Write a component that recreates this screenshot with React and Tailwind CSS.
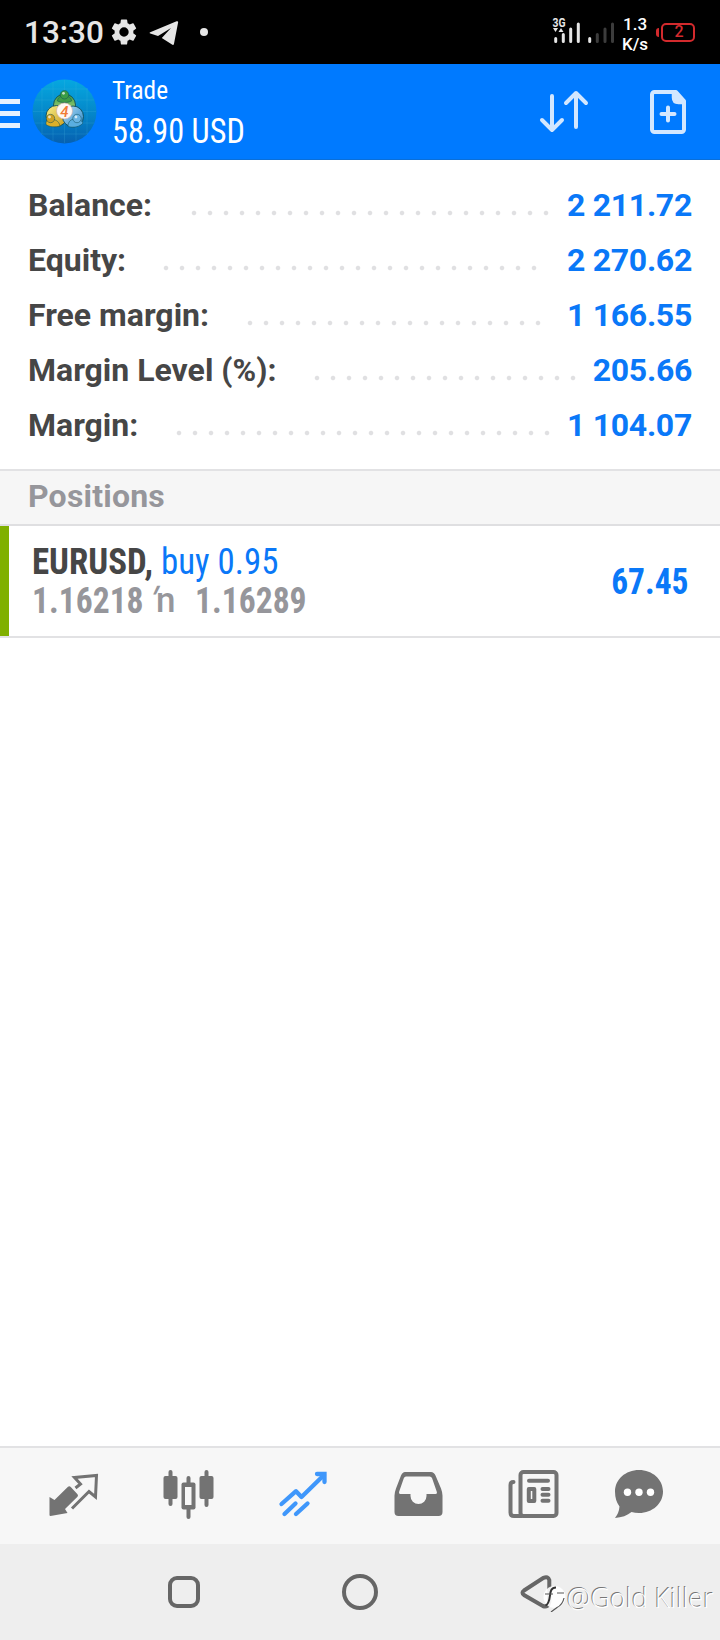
import React from "react";

const summary = [
  { label: "Balance:", value: "2 211.72", labelWidth: "w-[158px]", dotsWidth: "w-[368px]" },
  { label: "Equity:", value: "2 270.62", labelWidth: "w-[130px]", dotsWidth: "w-[384px]" },
  { label: "Free margin:", value: "1 166.55", labelWidth: "w-[214px]", dotsWidth: "w-[304px]" },
  { label: "Margin Level (%):", value: "205.66", labelWidth: "w-[281px]", dotsWidth: "w-[272px]" },
  { label: "Margin:", value: "1 104.07", labelWidth: "w-[143px]", dotsWidth: "w-[384px]" },
];

function StatusBar() {
  return (
    <div className="flex h-16 shrink-0 items-center bg-black text-[#e6e6e6]">
      <div className="ml-[24px] w-[87px] text-[31.5px] font-medium leading-[64px] pt-[2px]">13:30</div>
      <svg className="h-[26px] w-[26px]" viewBox="2 2 20 20" fill="currentColor">
        <path d="M19.14 12.94c.04-.3.06-.61.06-.94 0-.32-.02-.64-.07-.94l2.03-1.58a.49.49 0 0 0 .12-.61l-1.92-3.32a.49.49 0 0 0-.59-.22l-2.39.96c-.5-.38-1.03-.7-1.62-.94l-.36-2.54a.48.48 0 0 0-.48-.41h-3.84c-.24 0-.43.17-.47.41l-.36 2.54c-.59.24-1.13.57-1.62.94l-2.39-.96a.48.48 0 0 0-.59.22L2.74 8.87c-.12.21-.08.47.12.61l2.03 1.58c-.05.3-.09.63-.09.94s.02.64.07.94l-2.03 1.58a.49.49 0 0 0-.12.61l1.92 3.32c.12.22.37.29.59.22l2.39-.96c.5.38 1.03.7 1.62.94l.36 2.54c.05.24.24.41.48.41h3.84c.24 0 .44-.17.47-.41l.36-2.54c.59-.24 1.13-.56 1.62-.94l2.39.96c.22.08.47 0 .59-.22l1.92-3.32a.48.48 0 0 0-.12-.61l-2.01-1.58zM12 15.6A3.6 3.6 0 1 1 12 8.4a3.6 3.6 0 0 1 0 7.2z" />
      </svg>
      <svg className="ml-[12px] mt-[1px] h-[26px] w-[30px]" viewBox="0 0 30 26" fill="currentColor">
        <path d="M1.2 12.2 27.6 1.3c1-.4 1.700.2 1.500 1.300L25 23.800c-.2 1.200-1.100 1.500-2 .8L12.800 18 22 8 9 16 1.300 13.600c-.9-.3-.9-1-.1-1.400z" />
      </svg>
      <span className="ml-[21px] h-[8px] w-[8px] rounded-full bg-[#e6e6e6]" />
      <svg className="ml-[344px] h-[36px] w-[64px]" viewBox="0 0 64 36">
        <text x="0.5" y="12.5" fontSize="13" fontWeight="700" textLength="13" lengthAdjust="spacingAndGlyphs" fill="#e6e6e6">3G</text>
        <path d="M1 14h5l-2.500 4zM6.500 18h5l-2.500-4z" fill="#e6e6e6" />
        <g strokeWidth="3" strokeLinecap="round" stroke="#e6e6e6">
          <path d="M3.700 24.500v3M11.300 20.500v7M18.700 15v12.500M26.300 10v17.500M37.700 24.500v3" />
          <path d="M45.300 20.500v7M53 15v12.500M60.500 10v17.500" stroke="#3c3c3c" />
        </g>
      </svg>
      <div className="ml-[6px] mt-[4px] flex w-[34px] flex-col whitespace-nowrap text-[17px] font-medium text-white">
        <div className="h-[20px] pl-px leading-[20px]">1.3</div>
        <div className="h-[20px] leading-[20px]">K/s</div>
      </div>
      <div className="flex items-center">
        <span className="h-[9px] w-[3px] rounded-l-sm bg-[#d32a2d]" />
        <span className="ml-[2px] flex h-[19px] w-[34px] items-center justify-center rounded-[5px] border-2 border-[#d32a2d] pl-[2px] text-[16px] font-medium leading-none text-[#d32a2d]">
          2
        </span>
      </div>
    </div>
  );
}

function AppLogo() {
  return (
    <svg className="ml-[12px] h-[65px] w-[65px]" viewBox="0 0 65 65">
      <defs>
        <linearGradient id="sky" x1="0" y1="0" x2="0" y2="1">
          <stop offset="0" stopColor="#06a8e0" />
          <stop offset="0.55" stopColor="#0485c8" />
          <stop offset="1" stopColor="#0660b0" />
        </linearGradient>
        <linearGradient id="green" x1="0" y1="0" x2="0" y2="1">
          <stop offset="0" stopColor="#3a9d45" />
          <stop offset="1" stopColor="#c4e08a" />
        </linearGradient>
        <linearGradient id="gold" x1="0" y1="0" x2="1" y2="1">
          <stop offset="0" stopColor="#f7f08a" />
          <stop offset="1" stopColor="#c99a1a" />
        </linearGradient>
        <linearGradient id="blue" x1="0" y1="0" x2="1" y2="1">
          <stop offset="0" stopColor="#b5e0f7" />
          <stop offset="1" stopColor="#2a86c8" />
        </linearGradient>
      </defs>
      <circle cx="32.500" cy="32.500" r="32" fill="url(#sky)" />
      <path d="M10 9v46M21 3v59M32.500 1v63M44 3v59M55 9v46M9 10h47M3 21h59M1 32.500h63M3 44h59M9 55h47" stroke="#4db8e0" strokeOpacity="0.2" />
      <g stroke="#0d4d59" strokeWidth="0.900">
        <circle cx="32.500" cy="26" r="11" fill="url(#green)" />
        <circle cx="24.500" cy="37" r="10.500" fill="url(#gold)" />
        <circle cx="41" cy="37.500" r="10.500" fill="url(#blue)" />
      </g>
      <g stroke="#0d4d59" strokeWidth="0.500">
        <path d="M25.500 22c0-3.500 3-5 7-5s7 1.500 7 5c-4 2-10 2-14 0z" fill="#3f9c46" />
        <path d="M14 45.500c-.5-4 2-5.500 5-5.500s8 1.500 9 7c-5 1.500-11 1-14-1.500z" fill="#dcb02a" />
        <path d="M36 47.500c0-5 3-7.500 7-7.500s7 1.500 8 4c-3 4-10 5-15 3.500z" fill="#5aaee0" />
        <circle cx="32.500" cy="15.800" r="4.200" fill="#3a9d45" />
        <circle cx="18.500" cy="39.500" r="4.200" fill="#cfa224" />
        <circle cx="45" cy="39.500" r="4.200" fill="#68b4e4" />
      </g>
      <g fill="#fff" fillOpacity="0.700">
        <circle cx="31.500" cy="14.300" r="1.400" />
        <circle cx="17.500" cy="38" r="1.400" />
        <circle cx="44" cy="38" r="1.400" />
      </g>
      <circle cx="32.500" cy="32" r="8" fill="#fdf8f3" stroke="#caa" strokeWidth="0.600" />
      <text x="32.500" y="37.500" textAnchor="middle" fontSize="15" fontStyle="italic" fontWeight="500" fill="#f07a35">4</text>
    </svg>
  );
}

function Header() {
  return (
    <div className="flex h-24 shrink-0 items-center border-b border-[#0b6fd8] bg-[#007aff] text-white">
      <div className="mt-[3px] flex w-[20px] flex-col gap-[7px]">
        <span className="h-[5px] bg-[#e4f1ff]" />
        <span className="h-[5px] bg-[#e4f1ff]" />
        <span className="h-[5px] bg-[#e4f1ff]" />
      </div>
      <AppLogo />
      <div className="ml-[15px] mb-[2px] w-[414px] whitespace-nowrap font-stretch-75%">
        <div className="w-fit origin-left scale-x-[0.955] text-[26.5px] leading-[40px]">Trade</div>
        <div className="w-fit origin-left scale-x-[0.935] text-[34.500px] leading-[42px]">58.90 USD</div>
      </div>
      <svg className="ml-[12px] h-[46px] w-[52px]" viewBox="0 0 52 46" fill="none" stroke="#d3e7ff" strokeWidth="4" strokeLinecap="round" strokeLinejoin="round">
        <path d="M14 7v34M4 31l10 10 10-10M38 38V4M28 14 38 4l10 10" />
      </svg>
      <svg className="ml-[59px] h-[46px] w-[38px]" viewBox="0 0 38 46" fill="none" stroke="#d3e7ff" strokeWidth="4" strokeLinejoin="round">
        <path d="M3 5.500a2.500 2.500 0 0 1 2.500-2.500H27l8 9v28.500a2.500 2.500 0 0 1-2.500 2.500h-27A2.500 2.500 0 0 1 3 40.500z" />
        <path d="M23.500 3.500v5c0 4 2.500 6 6 6H36L27 4z" fill="#d3e7ff" strokeWidth="1.500" />
        <path d="M19 18.500v13M12.500 25h13" strokeLinecap="round" />
      </svg>
    </div>
  );
}

function AccountSummary() {
  return (
    <div className="h-[311px] shrink-0 border-b-2 border-[#e2e2e4] pt-[18px] pr-[28px] pl-[28px]">
      {summary.map((row) => (
        <div key={row.label} className="flex h-[55px] items-center text-[32px] leading-[55px]">
          <div className={`shrink-0 whitespace-nowrap font-bold text-[#464646] ${row.labelWidth}`}>{row.label}</div>
          <div
            className={`mt-[14px] h-[6px] shrink-0 bg-[radial-gradient(circle,#e0e0e2_1.800px,transparent_2.700px)] bg-[length:16px_6px] ${row.dotsWidth}`}
          />
          <div className="ml-auto whitespace-nowrap font-bold text-[#0a78f8] -tracking-[0.3px]">{row.value}</div>
        </div>
      ))}
    </div>
  );
}

function Positions() {
  return (
    <div className="flex-1">
      <div className="h-[55px] border-b-2 border-[#dfdfe1] bg-[#f6f6f6] pl-[28px] text-[32px] font-bold leading-[51px] tracking-[0.2px] text-[#96969b]">
        Positions
      </div>
      <div className="flex h-[112px] items-center border-b-2 border-[#e2e2e4] pr-[32px] font-stretch-75%">
        <div className="h-[110px] w-[9px] bg-[#80b000]" />
        <div className="ml-[23px] whitespace-nowrap text-[36.500px] leading-[39px]">
          <div className="flex">
            <div className="w-[129px]">
              <div className="w-fit origin-left scale-x-[0.955] font-bold text-[#464646]">EURUSD,</div>
            </div>
            <div className="w-fit origin-left scale-x-[0.955] text-[#0a78f8]">buy 0.95</div>
          </div>
          <div className="flex font-bold text-[#96969b]">
            <div className="w-[117px]">
              <div className="w-fit origin-left scale-x-[0.92]">1.16218</div>
            </div>
            <div className="flex w-[46px] text-[35px] font-medium font-stretch-100%">
              <span className="w-[7px] -skew-x-[24deg]">'</span>
              <span>n</span>
            </div>
            <div className="w-fit origin-left scale-x-[0.92]">1.16289</div>
          </div>
        </div>
        <div className="mt-[2px] ml-auto origin-right scale-x-[0.915] text-[36.500px] font-bold text-[#0a78f8]">67.45</div>
      </div>
    </div>
  );
}

function TabBar() {
  return (
    <div className="flex h-[98px] shrink-0 items-center border-t-2 border-[#e2e2e4] bg-[#f7f7f7] pl-[44px] text-[#737373]">
      <svg className="h-[56px] w-[60px]" viewBox="44 1468 60 56">
        <path d="M49.500 1497 54.500 1500 68 1486.700q1.500-1 3 .5l6.500 7q1 1.300 0 2.500L65 1509l2.500 4-17 3q-1 0-1-1z" fill="currentColor" />
        <path d="M75.500 1488 80.500 1484 74.500 1477.500 96.500 1475.500 95.500 1497 89 1491.500 72 1508.500" fill="none" stroke="currentColor" strokeWidth="3" />
      </svg>
      <svg className="ml-[56px] h-[56px] w-[56px]" viewBox="160 1468 56 56" fill="currentColor">
        <path d="M170.500 1472v32M206.500 1472v33M188.500 1478v39" stroke="currentColor" strokeWidth="4" strokeLinecap="round" />
        <rect x="163.500" y="1476" width="14" height="23" rx="2" />
        <rect x="199.500" y="1476" width="14" height="23" rx="2" />
        <rect x="181.500" y="1482.500" width="14" height="27" rx="2" />
        <rect x="185" y="1487" width="6.500" height="18" fill="#f7f7f7" />
      </svg>
      <svg className="ml-[60px] h-[56px] w-[56px]" viewBox="276 1468 56 56" fill="none" stroke="#3f97fb" strokeWidth="4.300" strokeLinecap="round" strokeLinejoin="round">
        <path d="M281.500 1504 296 1491.200 301.500 1497 324 1475" />
        <path d="M284.500 1514 295.500 1503.500M296 1514 307.500 1503.500" />
        <path d="M317 1474h7.500v8" strokeLinejoin="miter" />
      </svg>
      <svg className="ml-[60px] h-[56px] w-[56px]" viewBox="392 1468 56 56" fill="currentColor" fillRule="evenodd">
        <path d="M405 1472h26q3 0 4.500 3.500l5.500 13q1.500 4 1.500 7v16.500q0 4-4 4h-40q-4 0-4-4v-16.500q0-3 1.500-7l5-13q1.500-3.500 4-3.500zM406 1476.500q-1.500 0-2.200 1.800l-4.600 13.200q-.7 2.500 1.300 2.500h10v2a8 8 0 0 0 16 0v-2h9q2 0 1.200-2.500l-4.600-13.200q-.7-1.800-2.500-1.800z" />
      </svg>
      <svg className="ml-[56px] h-[56px] w-[60px]" viewBox="504 1468 60 56" fill="none" stroke="currentColor" strokeWidth="4" strokeLinecap="round" strokeLinejoin="round">
        <rect x="520.500" y="1472" width="36" height="44" rx="3" />
        <path d="M513.500 1482q-3 0-3 3v27.500q0 3.500 3.500 3.500h8" />
        <path d="M529 1480.800h19M542.500 1489h6M542.500 1494.800h6M542.500 1500.800h6" />
        <rect x="528.800" y="1489" width="5.500" height="12" />
      </svg>
      <svg className="ml-[48px] h-[56px] w-[56px]" viewBox="612 1468 56 56">
        <path d="M639 1470c13.500 0 24 9.500 24 21.500s-10.500 21.500-24 21.500q-4 0-7.500-1c-4 3.500-10 5.500-16.500 6q4-5 4.500-11.500-4.500-6-4.500-15c0-12 10.500-21.500 24-21.500z" fill="currentColor" />
        <g fill="#fff">
          <circle cx="627.500" cy="1492.300" r="3.700" />
          <circle cx="639" cy="1492.300" r="3.700" />
          <circle cx="650.500" cy="1492.300" r="3.700" />
        </g>
      </svg>
    </div>
  );
}

function SystemNav() {
  return (
    <div className="flex h-24 shrink-0 items-center bg-[#eeeeee]">
      <span className="ml-[168px] h-[32px] w-[32px] rounded-[9px] border-4 border-[#666]" />
      <span className="ml-[142px] h-[36px] w-[36px] rounded-full border-4 border-[#666]" />
      <div className="relative ml-[142px] h-[40px] w-[200px]">
        <svg className="h-[40px] w-[48px]" viewBox="520 1572 48 40">
          <path d="M524 1590.500 543.500 1577.800q4.500-2 5.800 2.200v22q-1 6-6.500 4L524 1595q-3-2.300 0-4.500z" fill="none" stroke="#666" strokeWidth="4" />
          <circle cx="554.500" cy="1597" r="11" fill="#fff" fillOpacity="0.900" />
          <path d="M556 1587.500c-5 0-5.500 4-6 8s-2 9-4.500 10" fill="none" stroke="#333" strokeWidth="2" />
          <path d="M545 1594h8M557 1593h7M564 1598c-1 5-4 8-7 9.500l-6 4.500" fill="none" stroke="#555" strokeWidth="1.200" />
        </svg>
        <div className="absolute top-[10px] left-[47px] whitespace-nowrap font-['Open_Sans'] text-[26.800px] font-light leading-[32px] text-white [text-shadow:-1px_-1px_0_#777]">
          @Gold Killer
        </div>
      </div>
    </div>
  );
}

export default function App() {
  return (
    <div className="flex h-[1640px] w-[720px] flex-col overflow-hidden bg-white font-[Roboto,sans-serif]">
      <StatusBar />
      <Header />
      <AccountSummary />
      <Positions />
      <TabBar />
      <SystemNav />
    </div>
  );
}
